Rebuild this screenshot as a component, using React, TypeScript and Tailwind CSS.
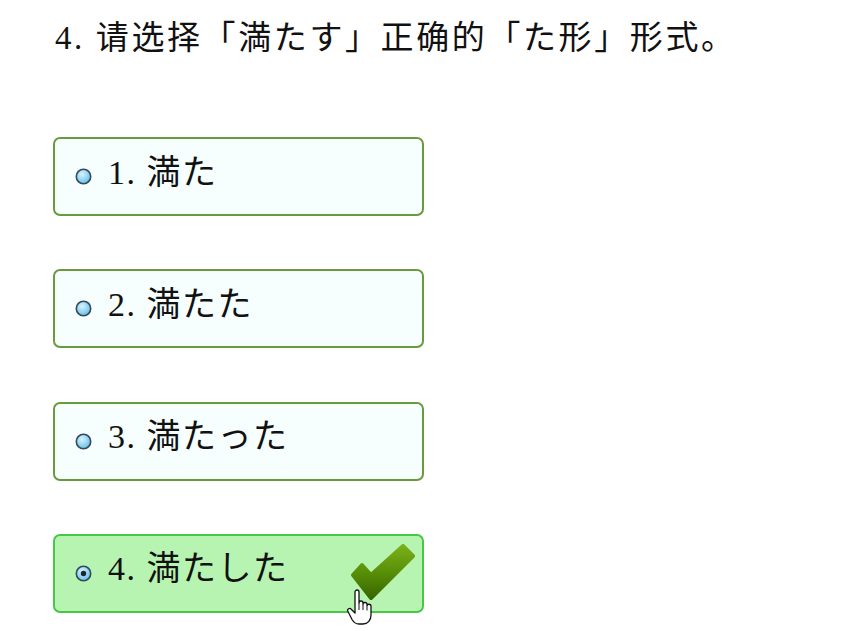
import { useState } from 'react';

const options = [
  { id: 1, label: '満た' },
  { id: 2, label: '満たた' },
  { id: 3, label: '満たった' },
  { id: 4, label: '満たした' },
];

const fontStack = '"Liberation Serif", "Noto Sans CJK SC", "Noto Sans CJK JP", serif';

function Radio({ checked }: { checked: boolean }) {
  return (
    <svg width="17" height="17" viewBox="0 0 17 17" className="shrink-0">
      <defs>
        <radialGradient id={checked ? 'rg-on' : 'rg-off'} cx="40%" cy="35%" r="70%">
          <stop offset="0%" stopColor="#d8f3ff" />
          <stop offset="100%" stopColor="#5fbde6" />
        </radialGradient>
      </defs>
      <circle cx="8.5" cy="8.5" r="7.2" fill={`url(#${checked ? 'rg-on' : 'rg-off'})`} stroke="#34495a" strokeWidth="1.6" />
      {checked && <circle cx="8.5" cy="8.5" r="2.7" fill="#1a2630" />}
    </svg>
  );
}

function CheckMark() {
  return (
    <svg width="66" height="58" viewBox="0 0 66 58">
      <defs>
        <linearGradient id="chk" x1="0" y1="0" x2="0" y2="1">
          <stop offset="0%" stopColor="#78b01a" />
          <stop offset="55%" stopColor="#558c06" />
          <stop offset="100%" stopColor="#386600" />
        </linearGradient>
      </defs>
      <polygon
        points="4,31 13,21 22,31 54,2 64,12 22,54"
        fill="url(#chk)"
        stroke="url(#chk)"
        strokeWidth="4"
        strokeLinejoin="round"
      />
    </svg>
  );
}

function HandCursor() {
  return (
    <svg width="28" height="38" viewBox="0 0 28 38" className="absolute left-[346px] top-[589px]">
      <path
        d="M9 3 a2 2 0 0 1 4 0 v11 a2 2 0 0 1 4 0 v1.5 a2 2 0 0 1 4 0 v1.5 a2 2 0 0 1 4 0.5 V26 c0 5 -3 9 -8 9 h-4 c-3.5 0 -5.5 -2 -7 -4.5 L2 22.5 a1.9 1.9 0 0 1 3.2 -2.2 L9 24 Z"
        fill="#ffffff"
        stroke="#111111"
        strokeWidth="1.3"
        strokeLinejoin="round"
      />
      <path d="M13 14 v7 M17 16 v5 M21 17.5 v4" stroke="#111111" strokeWidth="1" />
    </svg>
  );
}

export default function App() {
  const [selected] = useState(4);

  return (
    <div className="relative w-[859px] h-[631px] bg-white overflow-hidden text-[#111]" style={{ fontFamily: fontStack }}>
      <div className="pl-[55px] pt-[14px]">
        <h2 className="text-[33px] leading-[48px] font-normal tracking-[2.6px]">4. 请选择「満たす」正确的「た形」形式。</h2>
      </div>

      <div className="pl-[53px] mt-[75px] flex flex-col gap-[53.3px]">
        {options.map((opt) => {
          const isOn = opt.id === selected;
          return (
            <div
              key={opt.id}
              className={
                isOn
                  ? 'w-[371px] h-[79px] rounded-[7px] border-2 border-[#46c846] bg-[#b8f4b1] flex items-center justify-between pl-[20px] pr-[7px]'
                  : 'w-[371px] h-[79px] rounded-[7px] border-2 border-[#689a3e] bg-[#f6fefe] flex items-center justify-between pl-[20px] pr-[7px]'
              }
            >
              <div className="flex items-center gap-[16px]">
                <Radio checked={isOn} />
                <span className="text-[34px] leading-none -mt-[8px] tracking-[1.5px]">
                  {opt.id}. {opt.label}
                </span>
              </div>
              {isOn && <CheckMark />}
            </div>
          );
        })}
      </div>

      <HandCursor />
    </div>
  );
}
